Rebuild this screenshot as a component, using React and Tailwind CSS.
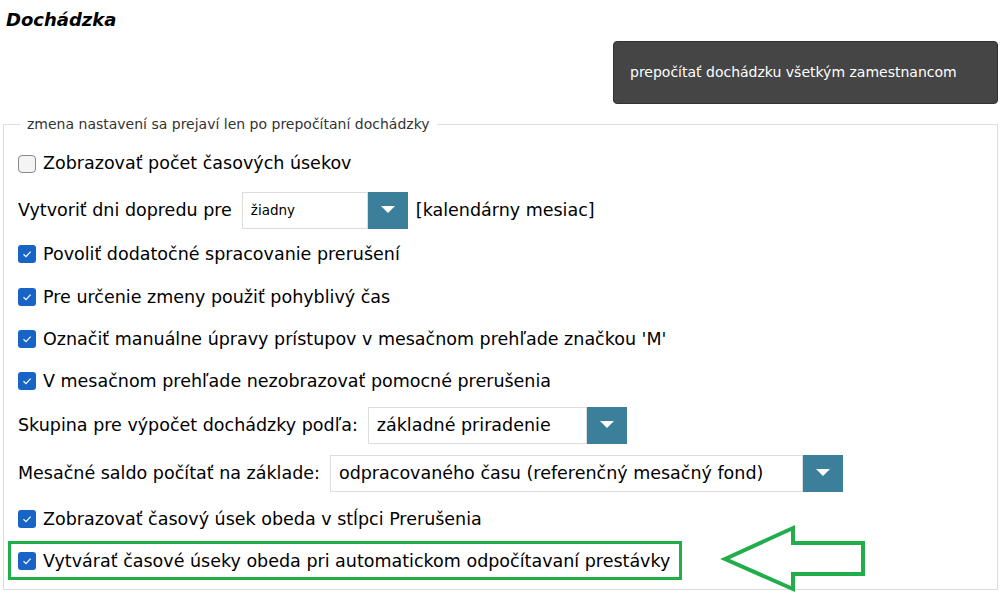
import React from "react";

const font = { fontFamily: '"DejaVu Sans", "Liberation Sans", sans-serif' };

const Check = ({ checked }) =>
  checked ? (
    <span className="flex items-center justify-center w-[18px] h-[18px] rounded-[3px] bg-[#1763c6] shrink-0">
      <svg width="12" height="12" viewBox="0 0 12 12">
        <path d="M2.5 6.3 L5 8.6 L9.6 3.6" fill="none" stroke="#fff" strokeWidth="1.2" />
      </svg>
    </span>
  ) : (
    <span className="block w-[18px] h-[18px] rounded-[4px] border border-[#8a8a8a] bg-[#f4f4f4] shrink-0" />
  );

const CheckRow = ({ checked, label, h }) => (
  <div className={`flex items-center gap-[7px] ${h}`}>
    <Check checked={checked} />
    <span>{label}</span>
  </div>
);

const Select = ({ value, w, small }) => (
  <div className={`flex h-[37px] ${w}`}>
    <div className={`flex-1 flex items-center border border-[#dcdcdc] bg-white pl-[8px] ${small ? "text-[13.5px]" : ""}`}>
      {value}
    </div>
    <div className="w-[40px] bg-[#3b7f9b] flex items-center justify-center">
      <svg width="14" height="8" viewBox="0 0 14 8">
        <path d="M0 0 H14 L7 7 Z" fill="#fff" />
      </svg>
    </div>
  </div>
);

export default function App() {
  return (
    <div className="relative w-[1008px] h-[601px] bg-white text-[17.5px] text-black overflow-hidden" style={font}>
      <h1 className="pl-[6px] pt-[8px] leading-[24px] text-[18px] font-bold italic">Dochádzka</h1>
      <div className="flex justify-end pr-[10px] mt-[9px]">
        <button className="w-[385px] h-[63px] rounded-[4px] bg-[#454545] border border-[#333] text-white text-[14px] text-left pl-[16px]">
          prepočítať dochádzku všetkým zamestnancom
        </button>
      </div>
      <fieldset className="ml-[3px] mt-[10px] w-[995px] border border-[#dddddd] pl-[14px] pb-[5px]">
        <legend className="ml-[2px] px-[7px] text-[14px] leading-[20px] text-[#333]">
          zmena nastavení sa prejaví len po prepočítaní dochádzky
        </legend>
        <div className="pt-[7px]">
          <CheckRow checked={false} label="Zobrazovať počet časových úsekov" h="h-[45px]" />
          <div className="flex items-center h-[48px]">
            <span className="mr-[10px]">Vytvoriť dni dopredu pre</span>
            <Select value="žiadny" w="w-[166px]" small />
            <span className="ml-[8px]">[kalendárny mesiac]</span>
          </div>
          <CheckRow checked label="Povoliť dodatočné spracovanie prerušení" h="h-[40px]" />
          <CheckRow checked label="Pre určenie zmeny použiť pohyblivý čas" h="h-[46px]" />
          <CheckRow checked label="Označiť manuálne úpravy prístupov v mesačnom prehľade značkou 'M'" h="h-[38px]" />
          <CheckRow checked label="V mesačnom prehľade nezobrazovať pomocné prerušenia" h="h-[46px]" />
          <div className="flex items-center h-[42px]">
            <span className="mr-[10px]">Skupina pre výpočet dochádzky podľa:</span>
            <Select value="základné priradenie" w="w-[259px]" />
          </div>
          <div className="flex items-center h-[54px]">
            <span className="mr-[10px]">Mesačné saldo počítať na základe:</span>
            <Select value="odpracovaného času (referenčný mesačný fond)" w="w-[513px]" />
          </div>
          <CheckRow checked label="Zobrazovať časový úsek obeda v stĺpci Prerušenia" h="h-[38px]" />
          <CheckRow checked label="Vytvárať časové úseky obeda pri automatickom odpočítavaní prestávky" h="h-[46px]" />
        </div>
      </fieldset>

      {/* annotation */}
      <div className="absolute left-[8px] top-[541px] w-[674px] h-[39px] border-[3px] border-[#22ad4b]" />
      <svg className="absolute left-0 top-0" width="1008" height="601" viewBox="0 0 1008 601">
        <path
          d="M725 559 L793 528 L793 543 L863 543 L863 574 L793 574 L793 589 Z"
          fill="none"
          stroke="#22ad4b"
          strokeWidth="4"
          strokeLinejoin="miter"
        />
      </svg>
    </div>
  );
}
